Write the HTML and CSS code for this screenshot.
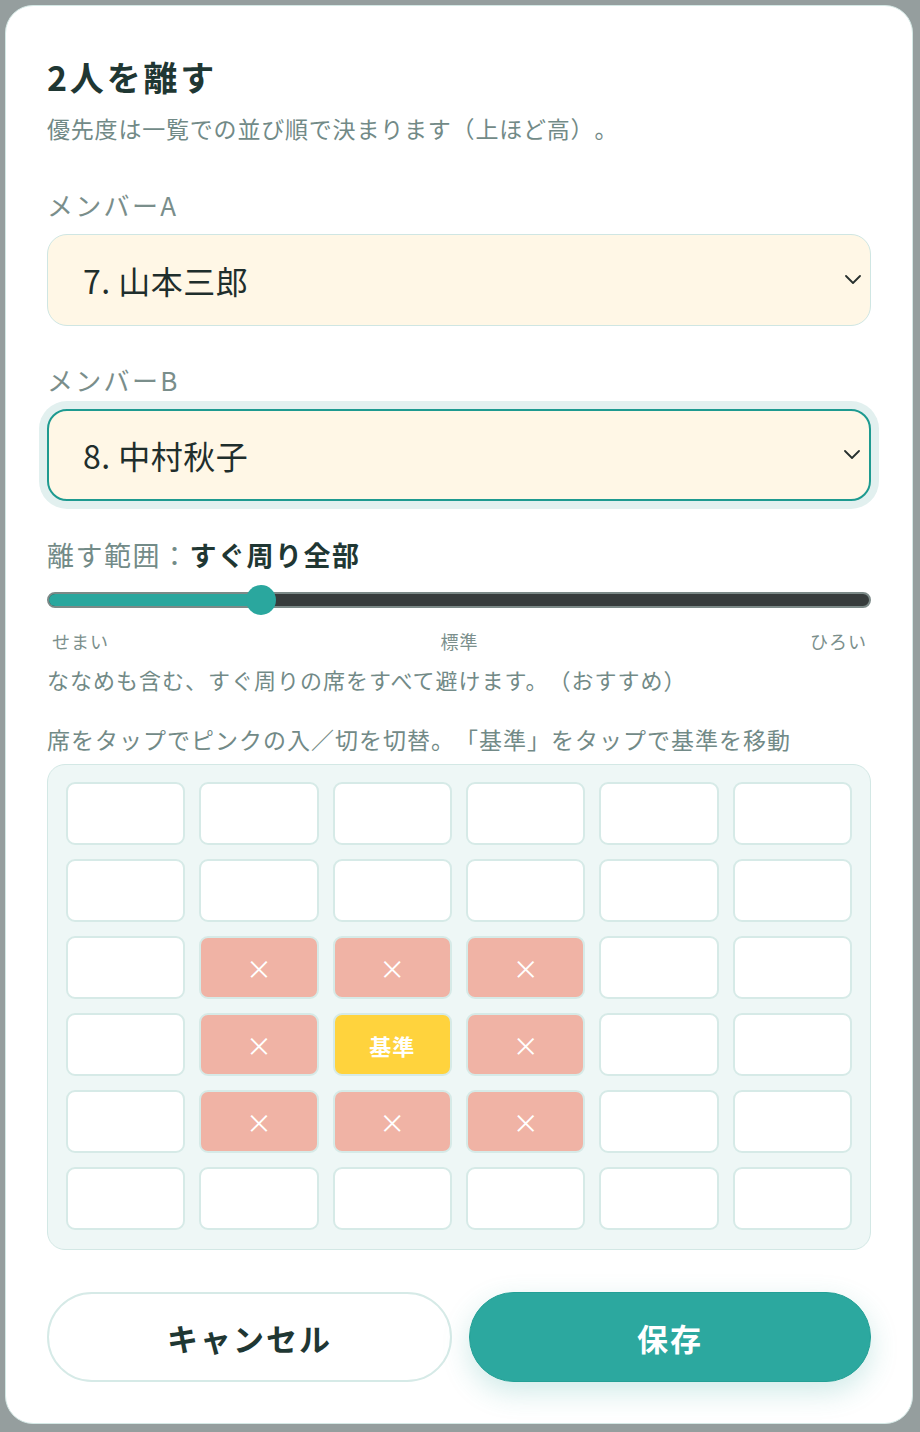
FILE: index.html
```html
<!DOCTYPE html>
<html lang="ja">
<head>
<meta charset="utf-8">
<title>2人を離す</title>
<link rel="stylesheet" href="styles.css">
</head>
<body>
<div class="backdrop">
  <div class="modal">
    <h1 class="title">2人を離す</h1>
    <p class="subtitle">優先度は一覧での並び順で決まります（上ほど高）。</p>

    <div class="field">
      <div class="label">メンバーA</div>
      <div class="select">
        <span class="select-value">7. 山本三郎</span>
        <svg class="chevron" width="16" height="9" viewBox="0 0 16 9"><polyline points="1,1 8,8 15,1" fill="none" stroke="#27302e" stroke-width="1.8" stroke-linecap="round" stroke-linejoin="round"/></svg>
      </div>
    </div>

    <div class="field field-b">
      <div class="label">メンバーB</div>
      <div class="select select-focus">
        <span class="select-value">8. 中村秋子</span>
        <svg class="chevron" width="16" height="9" viewBox="0 0 16 9"><polyline points="1,1 8,8 15,1" fill="none" stroke="#27302e" stroke-width="1.8" stroke-linecap="round" stroke-linejoin="round"/></svg>
      </div>
    </div>

    <div class="range-label"><span class="range-key">離す範囲：</span><span class="range-val">すぐ周り全部</span></div>

    <div class="slider">
      <div class="track">
        <div class="fill" style="width: 214px"></div>
      </div>
      <div class="thumb" style="left: 199px"></div>
    </div>
    <div class="ticks">
      <span>せまい</span>
      <span>標準</span>
      <span>ひろい</span>
    </div>
    <p class="desc">ななめも含む、すぐ周りの席をすべて避けます。（おすすめ）</p>
    <p class="hint">席をタップでピンクの入／切を切替。「基準」をタップで基準を移動</p>

    <div class="seats">
      <div class="seat"></div><div class="seat"></div><div class="seat"></div><div class="seat"></div><div class="seat"></div><div class="seat"></div>
      <div class="seat"></div><div class="seat"></div><div class="seat"></div><div class="seat"></div><div class="seat"></div><div class="seat"></div>
      <div class="seat"></div><div class="seat on">×</div><div class="seat on">×</div><div class="seat on">×</div><div class="seat"></div><div class="seat"></div>
      <div class="seat"></div><div class="seat on">×</div><div class="seat base">基準</div><div class="seat on">×</div><div class="seat"></div><div class="seat"></div>
      <div class="seat"></div><div class="seat on">×</div><div class="seat on">×</div><div class="seat on">×</div><div class="seat"></div><div class="seat"></div>
      <div class="seat"></div><div class="seat"></div><div class="seat"></div><div class="seat"></div><div class="seat"></div><div class="seat"></div>
    </div>

    <div class="actions">
      <button class="btn btn-cancel">キャンセル</button>
      <button class="btn btn-save">保存</button>
    </div>
  </div>
</div>
</body>
</html>
```

FILE: styles.css
```css
* { box-sizing: border-box; }
html, body {
  margin: 0;
  padding: 0;
  background: #959e9e;
}
body {
  font-family: "Noto Sans CJK JP", "Noto Sans", sans-serif;
  color: #1f3733;
  text-spacing-trim: space-all;
}
.backdrop {
  padding: 5px 7px 7px 5px;
  min-height: 1432px;
}
.modal {
  width: 908px;
  background: #ffffff;
  border: 1px solid #d4e8e5;
  border-radius: 28px;
  padding: 49px 41px 41px 41px;
  display: flex;
  flex-direction: column;
}
.title {
  margin: 0;
  font-size: 34px;
  line-height: 44px;
  font-weight: 700;
  letter-spacing: 2.8px;
  color: #1f3733;
}
.subtitle {
  margin: 13px 0 0;
  font-size: 23px;
  line-height: 32px;
  letter-spacing: 0.8px;
  color: #728a87;
}
.field { margin-top: 43px; }
.field-b { margin-top: 36px; }
.label {
  font-size: 26px;
  line-height: 36px;
  letter-spacing: 2.3px;
  color: #7a8e8b;
}
.select {
  margin-top: 11px;
  height: 92px;
  background: #fff7e6;
  border: 1.5px solid #cfe6e3;
  border-radius: 20px;
  display: flex;
  align-items: center;
  justify-content: space-between;
  padding: 0 9px 0 35px;
}
.select-focus {
  border: 2px solid #1e9a90;
  padding-left: 34px;
  box-shadow: 0 0 0 8px #e2f0ef;
}
.select-value {
  font-size: 32px;
  line-height: 40px;
  color: #1f2e2c;
  letter-spacing: 0.5px;
}
.chevron { display: block; margin-top: -2px; }
.range-label {
  margin-top: 35px;
  font-size: 27px;
  line-height: 38px;
  letter-spacing: 1.5px;
}
.range-key { color: #738b88; }
.range-val { font-weight: 700; color: #1f3733; }
.slider {
  position: relative;
  margin-top: 11px;
  height: 30px;
  display: flex;
  align-items: center;
}
.track {
  width: 100%;
  height: 16px;
  border-radius: 8px;
  background: #373c3c;
  border: 2px solid #7c8a88;
  overflow: hidden;
  display: flex;
}
.fill {
  height: 100%;
  background: #2aa79e;
}
.thumb {
  position: absolute;
  top: 0;
  width: 30px;
  height: 30px;
  border-radius: 50%;
  background: #2aa79e;
}
.ticks {
  margin-top: 13px;
  display: flex;
  justify-content: space-between;
  padding: 0 4px 0 5px;
  font-size: 18px;
  line-height: 26px;
  letter-spacing: 1px;
  color: #7b8f8c;
}
.desc {
  margin: 10px 0 0;
  font-size: 22px;
  line-height: 30px;
  letter-spacing: 1px;
  color: #728a87;
}
.hint {
  margin: 29px 0 0;
  font-size: 23px;
  line-height: 32px;
  letter-spacing: 1px;
  color: #728a87;
}
.seats {
  margin-top: 9px;
  background: #eef7f6;
  border: 1px solid #d3e8e5;
  border-radius: 18px;
  padding: 17px 18px 19px;
  display: grid;
  grid-template-columns: repeat(6, 1fr);
  grid-auto-rows: 63px;
  gap: 14px;
}
.seat {
  background: #ffffff;
  border: 2px solid #d6eae7;
  border-radius: 9px;
  display: flex;
  align-items: center;
  justify-content: center;
  color: #ffffff;
  font-size: 26px;
  line-height: 1;
}
.seat.on { background: #f0b3a5; }
.seat.base {
  background: #ffd33d;
  font-size: 22px;
  font-weight: 700;
  letter-spacing: 1px;
}
.actions {
  margin-top: 42px;
  display: grid;
  grid-template-columns: 405px 1fr;
  gap: 17px;
}
.btn {
  height: 90px;
  border-radius: 45px;
  font-family: "Noto Sans CJK JP", "Noto Sans", sans-serif;
  font-size: 31px;
  font-weight: 700;
  letter-spacing: 2px;
  cursor: pointer;
}
.btn-cancel {
  background: #ffffff;
  border: 2px solid #d6eae7;
  color: #1f3733;
}
.btn-save {
  background: #2ca89f;
  border: 1px solid #23a096;
  color: #ffffff;
  box-shadow: 0 10px 28px rgba(42, 160, 152, 0.22);
}
```
